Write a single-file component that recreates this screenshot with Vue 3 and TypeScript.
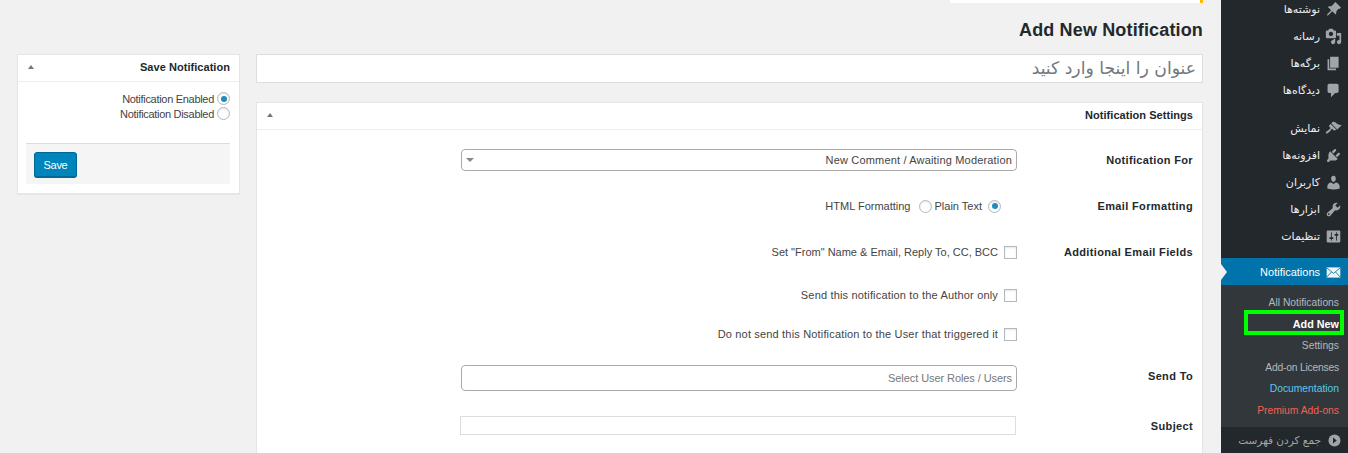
<script setup lang="ts">
interface MenuItem { label: string; d: string; gap?: boolean }
const menu: MenuItem[] = [
  { label: 'نوشته‌ها', d: 'M10.44 3.02l1.82-1.82 6.53 6.53-1.82 1.82-.97-.31-2.68 2.68c.17 1.02.04 2.4-.47 3.33l-.41.74-3.88-3.88-4.39 4.39-2.05.8.8-2.05 4.39-4.39-3.88-3.88.74-.41c.93-.51 2.31-.64 3.33-.47l2.68-2.68z' },
  { label: 'رسانه', d: 'M13 11V4c0-.55-.45-1-1-1h-1.67L9 1H5L3.67 3H2c-.55 0-1 .45-1 1v7c0 .55.45 1 1 1h10c.55 0 1-.45 1-1zM7 4.5c1.38 0 2.5 1.12 2.5 2.5S8.38 9.5 7 9.5 4.5 8.38 4.5 7 5.62 4.5 7 4.5zM14 6h5v10.5c0 1.38-1.12 2.5-2.5 2.5S14 17.88 14 16.5s1.12-2.5 2.5-2.5c.17 0 .34.02.5.05V9h-3V6zm-4 8.05V13h2v3.5c0 1.38-1.12 2.5-2.5 2.5S7 17.88 7 16.5 8.12 14 9.5 14c.17 0 .34.02.5.05z' },
  { label: 'برگه‌ها', d: 'M6 15V2h10v13H6zm-1 1h8v2H3V5h2v11z' },
  { label: 'دیدگاه‌ها', d: 'M5 2h9c1.1 0 2 .9 2 2v7c0 1.1-.9 2-2 2h-2l-5 5v-5H5c-1.1 0-2-.9-2-2V4c0-1.1.9-2 2-2z', gap: true },
  { label: 'نمایش', d: 'M14.48 11.06L7.41 3.99l1.5-1.5c.5-.56 2.3-.47 3.51.32 1.21.8 1.43 1.28 2.91 2.1 1.18.64 2.45 1.26 4.45.85zm-.71.71L6.7 4.7 4.93 6.47c-.39.39-.39 1.02 0 1.41l1.06 1.06c.39.39.39 1.03 0 1.42-.6.6-1.43 1.11-2.21 1.69-.35.26-.7.53-1.01.84C1.43 13.23.4 14.91 1.2 15.7c.79.8 2.47-.23 3.83-1.59.31-.31.58-.66.84-1.01.58-.78 1.09-1.61 1.69-2.21.39-.39 1.03-.39 1.42 0l1.06 1.06c.39.39 1.02.39 1.41 0z' },
  { label: 'افزونه‌ها', d: 'M13.11 4.36L9.87 7.6 8 5.73l3.24-3.24c.35-.34 1.05-.2 1.56.32.52.51.66 1.21.31 1.55zm-8 1.77l.91-1.12 9.01 9.01-1.19.84c-.71.71-2.63 1.16-3.82 1.16H6.14L4.9 17.26c-.59.59-1.54.59-2.12 0-.59-.58-.59-1.53 0-2.12l1.24-1.24v-3.88c0-1.13.4-3.19 1.09-3.89zm7.26 3.97l3.24-3.24c.34-.35 1.04-.21 1.55.31.52.51.66 1.21.31 1.55l-3.24 3.25z' },
  { label: 'کاربران', d: 'M10 9.25c-2.27 0-2.73-3.44-2.73-3.44C7 4.02 7.82 2 9.97 2c2.16 0 2.98 2.02 2.71 3.81 0 0-.41 3.44-2.68 3.44zm0 2.57L12.72 10c2.39 0 4.52 2.33 4.52 4.53v2.49s-3.65 1.13-7.24 1.13c-3.65 0-7.24-1.13-7.24-1.13v-2.49c0-2.25 1.94-4.48 4.47-4.48z' },
  { label: 'ابزارها', d: 'M16.68 9.77c-1.34 1.34-3.3 1.67-4.95.99l-5.41 6.52c-.99.99-2.59.99-3.58 0s-.99-2.59 0-3.57l6.52-5.42c-.68-1.65-.35-3.61.99-4.95 1.28-1.28 3.12-1.62 4.72-1.06l-2.89 2.89 2.82 2.82 2.86-2.87c.53 1.58.18 3.39-1.08 4.65zM3.81 16.21c.4.39 1.04.39 1.43 0 .4-.4.4-1.04 0-1.43-.39-.4-1.03-.4-1.43 0-.39.39-.39 1.03 0 1.43z' },
  { label: 'تنظیمات', d: 'M18 16V4c0-.55-.45-1-1-1H3c-.55 0-1 .45-1 1v12c0 .55.45 1 1 1h14c.55 0 1-.45 1-1zM8 11h1c.55 0 1 .45 1 1s-.45 1-1 1H8v1.5c0 .28-.22.5-.5.5s-.5-.22-.5-.5V13H6c-.55 0-1-.45-1-1s.45-1 1-1h1V5.5c0-.28.22-.5.5-.5s.5.22.5.5V11zm5-2h-1c-.55 0-1-.45-1-1s.45-1 1-1h1V5.5c0-.28.22-.5.5-.5s.5.22.5.5V7h1c.55 0 1 .45 1 1s-.45 1-1 1h-1v5.5c0 .28-.22.5-.5.5s-.5-.22-.5-.5V9z' }
]
const submenu = [
  { label: 'All Notifications', cls: '' },
  { label: 'Add New', cls: 'current' },
  { label: 'Settings', cls: '' },
  { label: 'Add-on Licenses', cls: 'licenses' },
  { label: 'Documentation', cls: 'docs' },
  { label: 'Premium Add-ons', cls: 'premium' }
]
</script>

<template>
  <div class="page">
    <main class="main">
      <div class="notice"></div>
      <h1 class="title">Add New Notification</h1>
      <div class="columns">
        <aside class="box save">
          <div class="box-head">
            <span class="tri"></span>
            <span class="box-title">Save Notification</span>
          </div>
          <div class="save-options">
            <label class="opt">Notification Enabled <i class="radio on"></i></label>
            <label class="opt">Notification Disabled <i class="radio"></i></label>
          </div>
          <div class="save-actions">
            <button class="btn" type="button">Save</button>
          </div>
        </aside>

        <section class="content">
          <div class="title-input" dir="rtl">عنوان را اینجا وارد کنید</div>
          <div class="box settings">
            <div class="box-head">
              <span class="tri"></span>
              <span class="box-title">Notification Settings</span>
            </div>
            <div class="form">
              <div class="field">
                <div class="select">
                  <span class="caret"></span>
                  <span class="wide">New Comment / Awaiting Moderation</span>
                </div>
              </div>
              <div class="label">Notification For</div>

              <div class="field radios">
                <span class="html-label">HTML Formatting</span><i class="radio"></i>
                <span class="plain-label">Plain Text</span><i class="radio on"></i>
              </div>
              <div class="label">Email Formatting</div>

              <div class="field checks">
                <span>Set "From" Name &amp; Email, Reply To, CC, BCC</span><i class="check"></i>
              </div>
              <div class="label">Additional Email Fields</div>

              <div class="field checks">
                <span class="wide">Send this notification to the Author only</span><i class="check"></i>
              </div>
              <div class="label"></div>

              <div class="field checks">
                <span class="wide">Do not send this Notification to the User that triggered it</span><i class="check"></i>
              </div>
              <div class="label"></div>

              <div class="field">
                <div class="multi">Select User Roles / Users</div>
              </div>
              <div class="label raised">Send To</div>

              <div class="field">
                <div class="text-input"></div>
              </div>
              <div class="label">Subject</div>
            </div>
          </div>
        </section>
      </div>
    </main>

    <nav class="side">
      <ul class="menu">
        <li v-for="item in menu" :key="item.label" class="item" :class="{ spaced: item.gap }">
          <svg class="icon" viewBox="0 0 20 20"><path :d="item.d" /></svg>
          <span dir="rtl">{{ item.label }}</span>
        </li>
      </ul>
      <div class="active">
        <svg class="icon mail" viewBox="0 0 20 20">
          <rect x="2" y="4" width="16" height="12" fill="#f1f5f8" />
          <path d="M2 4.5l8 6.5 8-6.5M2 15.5l5.5-6M18 15.5l-5.5-6" fill="none" stroke="#0073aa" stroke-width="1" />
        </svg>
        <span>Notifications</span>
      </div>
      <ul class="sub">
        <li v-for="s in submenu" :key="s.label" class="sub-item" :class="s.cls">{{ s.label }}</li>
      </ul>
      <div class="collapse">
        <svg class="icon play" viewBox="0 0 20 20">
          <circle cx="10" cy="10" r="8" fill="#a0a5aa" />
          <path d="M8 6l5 4-5 4z" fill="#23282d" />
        </svg>
        <span dir="rtl">جمع کردن فهرست</span>
      </div>
    </nav>
  </div>
</template>

<style>
html, body { margin: 0; height: 453px; overflow: hidden; background: #f1f1f1; }
</style>

<style scoped>
.page {
  display: flex;
  width: 1348px;
  height: 453px;
  overflow: hidden;
  background: #f1f1f1;
  color: #444;
  font-family: "Liberation Sans", "DejaVu Sans", sans-serif;
  font-size: 11px;
}
.main { flex: 1; min-width: 0; }
.notice {
  width: 250px;
  height: 3px;
  margin-left: 950px;
  background: #fff;
  border-right: 3px solid #ffb900;
}
.title {
  margin: 16px 18px 0 0;
  height: 35px;
  font-size: 18px;
  line-height: 22px;
  font-weight: 700;
  letter-spacing: .15px;
  text-align: right;
  color: #23282d;
}
.columns { display: flex; gap: 16px; padding: 0 18px 0 17px; align-items: flex-start; }
.box {
  box-sizing: border-box;
  background: #fff;
  border: 1px solid #e5e5e5;
  box-shadow: 0 1px 1px rgba(0, 0, 0, .04);
}
.save { width: 223px; height: 140px; }
.box-head {
  box-sizing: border-box;
  height: 27px;
  display: flex;
  align-items: center;
  justify-content: space-between;
  padding: 0 9px 2px 10px;
  border-bottom: 1px solid #eee;
}
.box-title { font-weight: 700; letter-spacing: .05px; color: #23282d; }
.tri {
  width: 0;
  height: 0;
  border-left: 3px solid transparent;
  border-right: 3px solid transparent;
  border-bottom: 4px solid #72777c;
}
.save-options { height: 61px; padding: 9px 9px 0 0; box-sizing: border-box; letter-spacing: -.3px; }
.opt {
  display: flex;
  justify-content: flex-end;
  align-items: center;
  gap: 3px;
  height: 15px;
}
.radio {
  display: inline-block;
  box-sizing: border-box;
  position: relative;
  width: 13px;
  height: 13px;
  border: 1px solid #b4b9be;
  border-radius: 50%;
  background: #fff;
  box-shadow: inset 0 1px 2px rgba(0, 0, 0, .1);
  flex: none;
}
.radio.on::after {
  content: "";
  position: absolute;
  inset: 2.5px;
  border-radius: 50%;
  background: #1e8cbe;
}
.save-actions {
  box-sizing: border-box;
  height: 41px;
  margin: 0 9px 0 8px;
  padding: 8px 8px 0;
  background: #f5f5f5;
  border-top: 1px solid #ddd;
}
.btn {
  display: block;
  width: 43px;
  height: 25px;
  padding: 0;
  font: inherit;
  letter-spacing: -.3px;
  color: #fff;
  background: #0085ba;
  border: 1px solid #006799;
  border-radius: 3px;
  box-shadow: 0 1px 0 #006799;
}
.content { flex: 1; min-width: 0; }
.title-input {
  box-sizing: border-box;
  height: 29px;
  line-height: 27px;
  padding: 0 6px;
  background: #fff;
  border: 1px solid #ddd;
  font-family: "DejaVu Sans", sans-serif;
  font-size: 17.2px;
  color: #72777c;
  text-align: right;
}
.settings { margin-top: 19px; height: 400px; }
.form {
  display: grid;
  grid-template-columns: 556px 1fr;
  grid-template-rows: 46px 46px 46px 40px 38px 50px 46px;
  align-items: center;
  padding: 7px 9px 0 204px;
}
.label { font-weight: 700; letter-spacing: .35px; color: #23282d; text-align: right; }
.label.raised { margin-bottom: 4px; }
.field { display: flex; justify-content: flex-end; align-items: center; }
.wide { letter-spacing: .17px; }
.select, .multi {
  box-sizing: border-box;
  width: 100%;
  display: flex;
  align-items: center;
  justify-content: space-between;
  padding: 0 4px;
  background: #fff;
  border: 1px solid #aaa;
  border-radius: 4px;
}
.select { height: 22px; margin-bottom: 1px; }
.caret {
  width: 0;
  height: 0;
  border-left: 4px solid transparent;
  border-right: 4px solid transparent;
  border-top: 4px solid #888;
}
.multi { height: 26px; justify-content: flex-end; color: #777; letter-spacing: -.08px; }
.text-input {
  box-sizing: border-box;
  width: 100%;
  height: 19px;
  margin: 0 1px 2px -1px;
  background: #fff;
  border: 1px solid #ddd;
}
.radios { gap: 6px; padding-right: 16px; }
.html-label { margin-right: 2px; }
.plain-label { margin-left: -3px; }
.checks { gap: 6px; }
.check {
  display: inline-block;
  box-sizing: border-box;
  width: 13px;
  height: 13px;
  background: #fff;
  border: 1px solid #b4b9be;
  box-shadow: inset 0 1px 2px rgba(0, 0, 0, .1);
  flex: none;
}
.side {
  width: 127px;
  flex: none;
  height: 453px;
  background: #23282d;
  color: #eee;
  font-family: "DejaVu Sans", sans-serif;
  font-size: 11px;
}
.menu { list-style: none; margin: -4px 0 8px; padding: 0; }
.item {
  display: flex;
  flex-direction: row-reverse;
  align-items: center;
  gap: 5px;
  height: 27px;
  padding-right: 6px;
  justify-content: flex-start;
}
.item.spaced { margin-bottom: 11px; }
.icon { width: 17px; height: 17px; fill: #a0a5aa; flex: none; }
.active {
  position: relative;
  display: flex;
  flex-direction: row-reverse;
  align-items: center;
  gap: 5px;
  box-sizing: border-box;
  height: 27px;
  padding: 1px 6px 0 0;
  background: #0073aa;
  color: #fff;
  font-family: "Liberation Sans", sans-serif;
  font-size: 11px;
}
.active::before {
  content: "";
  position: absolute;
  left: 0;
  top: 6px;
  border-top: 8px solid transparent;
  border-bottom: 8px solid transparent;
  border-left: 6px solid #f1f1f1;
}
.sub {
  list-style: none;
  margin: 0;
  padding: 7px 0 0;
  background: #32373c;
  font-family: "Liberation Sans", sans-serif;
  font-size: 10.3px;
  height: 142px;
  box-sizing: border-box;
}
.sub-item {
  position: relative;
  height: 21.5px;
  line-height: 21.5px;
  padding-right: 9px;
  text-align: right;
  color: #b4b9be;
}
.sub-item.current { color: #fff; font-weight: 700; font-size: 10.8px; }
.sub-item.current::after {
  content: "";
  position: absolute;
  left: 23px;
  right: 4px;
  top: -3.5px;
  height: 25px;
  box-sizing: border-box;
  border: 4px solid #00ff00;
}
.sub-item.licenses { letter-spacing: -.2px; }
.sub-item.docs { color: #5bc8ea; }
.sub-item.premium { color: #f5604f; }
.collapse {
  display: flex;
  flex-direction: row-reverse;
  align-items: center;
  gap: 6px;
  height: 26px;
  padding-right: 6px;
  color: #a0a5aa;
  font-size: 10.5px;
}
.play { width: 15px; height: 15px; }
</style>
